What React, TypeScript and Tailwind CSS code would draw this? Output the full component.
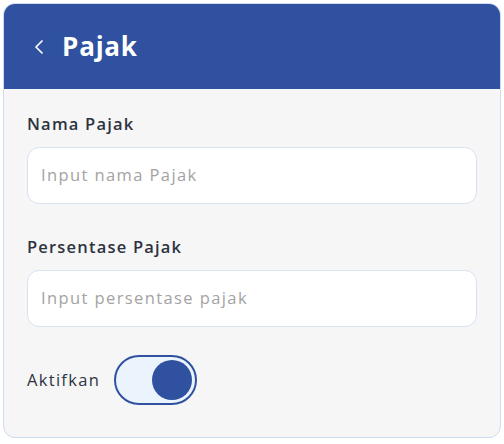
import { ChevronLeft } from "lucide-react";

export default function App() {
  return (
    <div className="w-[504px] h-[444px] bg-white p-[3px] font-['Open_Sans',sans-serif]">
      <div className="w-[498px] h-[435px] rounded-[12px] border border-[#cddcf0] bg-[#f6f6f6] overflow-hidden flex flex-col">
        {/* Header */}
        <div className="h-[85px] bg-[#2f51a0] flex items-center pl-[23px] gap-[11px] shrink-0">
          <ChevronLeft className="w-[24px] h-[24px] text-white" strokeWidth={1.75} />
          <h1 className="text-white text-[26px] font-bold tracking-[0.8px]">Pajak</h1>
        </div>

        {/* Form */}
        <div className="flex flex-col px-[23px] pt-[23px]">
          <label className="text-[16.5px] font-semibold text-[#2d3340] leading-[24px] tracking-[1.2px]">Nama Pajak</label>
          <div className="mt-[11px] h-[57px] rounded-[12px] border border-[#d8e2f2] bg-white flex items-center px-[13px]">
            <span className="text-[16.5px] text-[#a3a3a3] tracking-[1.4px]">Input nama Pajak</span>
          </div>

          <label className="mt-[31px] text-[16.5px] font-semibold text-[#2d3340] leading-[24px] tracking-[1.2px]">Persentase Pajak</label>
          <div className="mt-[11px] h-[57px] rounded-[12px] border border-[#d8e2f2] bg-white flex items-center px-[13px]">
            <span className="text-[16.5px] text-[#a3a3a3] tracking-[1.4px]">Input persentase pajak</span>
          </div>

          <div className="mt-[28px] flex items-center gap-[14px]">
            <span className="text-[16.5px] text-[#2d3340] tracking-[1.3px]">Aktifkan</span>
            <div className="w-[83px] h-[50px] rounded-full border-2 border-[#2f51a0] bg-[#ebf3fc] flex items-center justify-end pr-[3px]">
              <div className="w-[40px] h-[40px] rounded-full bg-[#2f51a0]" />
            </div>
          </div>
        </div>
      </div>
    </div>
  );
}
